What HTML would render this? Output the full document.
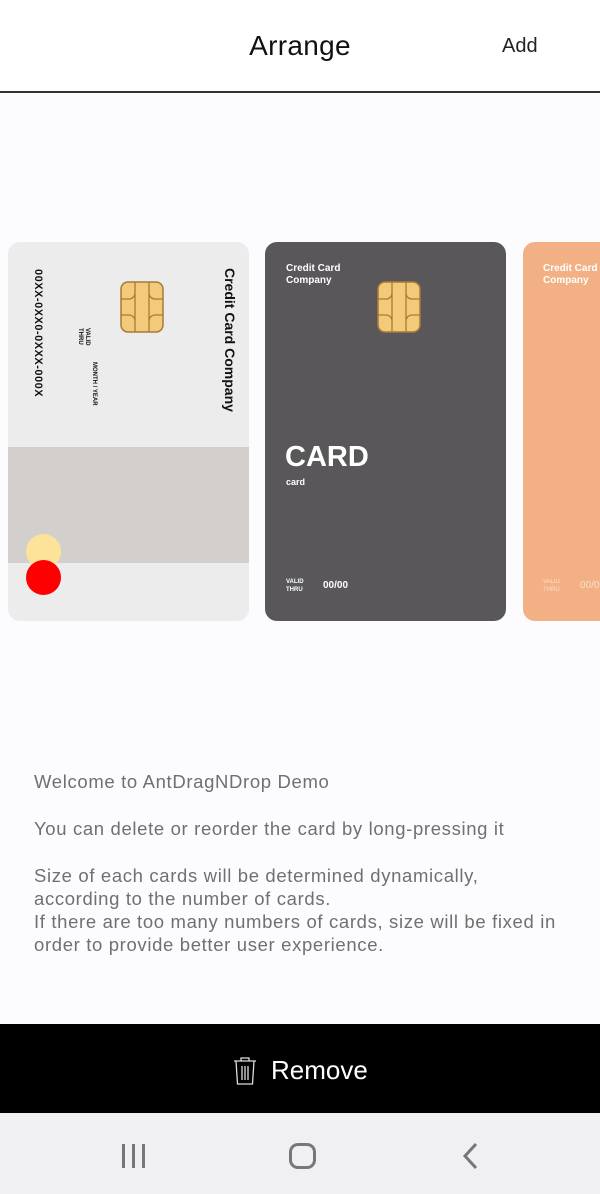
<!DOCTYPE html>
<html><head><style>
*{margin:0;padding:0;box-sizing:border-box}
body{width:600px;height:1194px;background:#fcfbfd;font-family:"Liberation Sans","DejaVu Sans",sans-serif;position:relative;overflow:hidden}
.a{position:absolute}
.card{position:absolute;top:242px;height:379px;border-radius:12px;overflow:hidden}
.rot{position:absolute;transform-origin:left top;transform:rotate(90deg);white-space:nowrap}
.chip{position:absolute;width:44px;height:52px}
</style></head><body>
<div class="a" style="left:0;top:0;width:600px;height:93px;background:#fff;border-bottom:2px solid #333"></div>
<div class="a" style="left:0;top:30px;width:600px;text-align:center;font-size:28px;color:#111;letter-spacing:0.3px">Arrange</div>
<div class="a" style="left:502px;top:35px;font-size:20px;color:#222">Add</div>

<div class="card" style="left:8px;width:241px;background:#ececed">
 <div class="a" style="left:0;top:205px;width:241px;height:116px;background:#d2cfcd"></div>
 <div class="a" style="left:18px;top:292px;width:35px;height:35px;border-radius:50%;background:#fde39a"></div>
 <div class="a" style="left:18px;top:318px;width:35px;height:35px;border-radius:50%;background:#f00"></div>
 <div class="rot" style="left:230px;top:26px;font-size:14px;font-weight:bold;color:#111">Credit Card Company</div>
 <div class="rot" style="left:36px;top:27px;font-size:11px;font-weight:bold;color:#111;letter-spacing:0.5px">00XX-0XX0-0XXX-000X</div>
 <div class="rot" style="left:82px;top:86px;font-size:6px;font-weight:bold;color:#111;line-height:7px">VALID<br>THRU</div>
 <div class="rot" style="left:89px;top:120px;font-size:6px;font-weight:bold;color:#111">MONTH / YEAR</div>
</div>
<svg class="chip" style="left:120px;top:281px" viewBox="0 0 44 52"><rect x="1" y="1" width="42" height="50" rx="7" fill="#f3c97a" stroke="#a77b3a" stroke-width="1.5"/><path d="M1 18h8a6 6 0 0 0 6-6V1M1 34h8a6 6 0 0 1 6 6v11M43 18h-8a6 6 0 0 1-6-6V1M43 34h-8a6 6 0 0 0-6 6v11M15 12v28M29 12v28" fill="none" stroke="#a77b3a" stroke-width="1.3"/></svg>

<div class="card" style="left:265px;width:241px;background:#59575a;color:#fff">
 <div class="a" style="left:21px;top:21px;font-size:10px;font-weight:bold;line-height:12px">Credit Card<br>Company</div>
 <div class="a" style="left:20px;top:199px;font-size:29px;font-weight:bold">CARD</div>
 <div class="a" style="left:21px;top:235px;font-size:9px;font-weight:bold">card</div>
 <div class="a" style="left:21px;top:336px;font-size:6px;font-weight:bold;line-height:8px">VALID<br>THRU</div>
 <div class="a" style="left:58px;top:338px;font-size:10px;font-weight:bold">00/00</div>
</div>
<svg class="chip" style="left:377px;top:281px" viewBox="0 0 44 52"><rect x="1" y="1" width="42" height="50" rx="7" fill="#f3c97a" stroke="#a77b3a" stroke-width="1.5"/><path d="M1 18h8a6 6 0 0 0 6-6V1M1 34h8a6 6 0 0 1 6 6v11M43 18h-8a6 6 0 0 1-6-6V1M43 34h-8a6 6 0 0 0-6 6v11M15 12v28M29 12v28" fill="none" stroke="#a77b3a" stroke-width="1.3"/></svg>

<div class="card" style="left:523px;width:120px;background:#f2b084;color:#fff">
 <div class="a" style="left:20px;top:21px;font-size:10px;font-weight:bold;line-height:12px;white-space:nowrap">Credit Card<br>Company</div>
 <div class="a" style="left:20px;top:336px;font-size:6px;line-height:8px;opacity:.6">VALID<br>THRU</div>
 <div class="a" style="left:57px;top:338px;font-size:10px;opacity:.6">00/00</div>
</div>

<div class="a" style="left:34px;top:770px;font-size:18.5px;color:#707070;line-height:23px;width:566px;letter-spacing:0.65px;white-space:nowrap">
Welcome to AntDragNDrop Demo<br><div style="height:24px"></div>You can delete or reorder the card by long-pressing it<br><div style="height:24px"></div>Size of each cards will be determined dynamically,<br>according to the number of cards.<br>If there are too many numbers of cards, size will be fixed in<br>order to provide better user experience.
</div>

<div class="a" style="left:0;top:1024px;width:600px;height:89px;background:#000"></div>
<svg class="a" style="left:233px;top:1056px" width="24" height="30" viewBox="0 0 24 30" fill="none" stroke="#ddd" stroke-width="1.3"><path d="M1 5h22M8 5V2h8v3M3 5l1.5 23h15L21 5M9 10v14M12 10v14M15 10v14"/></svg>
<div class="a" style="left:271px;top:1055px;font-size:26px;color:#fff">Remove</div>

<div class="a" style="left:0;top:1113px;width:600px;height:81px;background:#f0eff1"></div>
<div class="a" style="left:122px;top:1144px;width:3px;height:24px;background:#777"></div>
<div class="a" style="left:132px;top:1144px;width:3px;height:24px;background:#777"></div>
<div class="a" style="left:142px;top:1144px;width:3px;height:24px;background:#777"></div>
<div class="a" style="left:289px;top:1143px;width:27px;height:26px;border:3px solid #777;border-radius:9px"></div>
<svg class="a" style="left:460px;top:1142px" width="20" height="28" viewBox="0 0 20 28"><path d="M16 2L5 14l11 12" fill="none" stroke="#777" stroke-width="3"/></svg>
</body></html>
